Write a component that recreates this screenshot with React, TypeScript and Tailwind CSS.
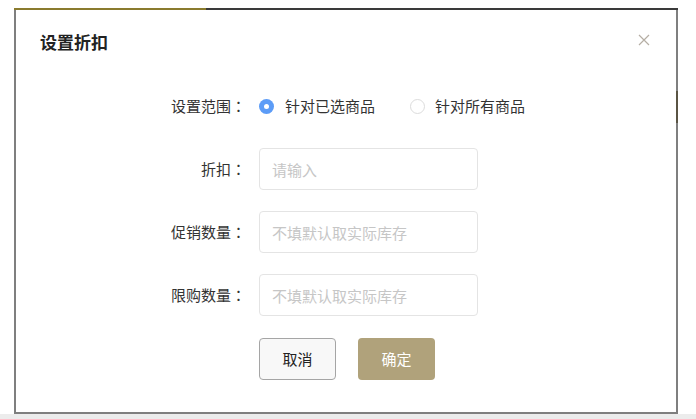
import React from "react";

const font = { fontFamily: '"Noto Sans CJK SC", "Noto Sans", sans-serif' };
const colonFont = { fontFamily: '"Noto Sans CJK JP", "Noto Sans CJK SC", sans-serif' };

function Label({ text }: { text: string }) {
  return (
    <div className="w-[230px] shrink-0 text-right text-[15px] leading-[20px] text-[#333333]">
      {text}
      <span style={colonFont}>：</span>
    </div>
  );
}

function Field({ label, placeholder }: { label: string; placeholder: string }) {
  return (
    <div className="flex h-[42px] items-center">
      <Label text={label} />
      <input
        className="ml-[13px] h-[42px] w-[219px] rounded-[4px] border border-[#e4e4e4] bg-white px-[12px] text-[15px] text-[#333] outline-none placeholder:text-[#c6c6c6]"
        placeholder={placeholder}
        style={font}
      />
    </div>
  );
}

export default function App() {
  return (
    <div className="flex h-[419px] w-[696px] flex-col overflow-hidden bg-white" style={font}>
      <div className="flex flex-1 pl-[14px] pt-[8px]">
        <div className="relative flex h-[406px] w-[664px] flex-col">
          <div className="flex h-[2px] shrink-0">
            <div className="w-[192px] bg-[#8a7b2e]" />
            <div className="flex-1 bg-[#3a3a3a]" />
          </div>
          <div className="flex flex-1 flex-col border-x-2 border-b-2 border-[#7f7f7f] bg-white">
            <div className="flex items-center justify-between pl-[24px] pr-[26px] pt-[20px]">
              <div className="text-[17px] font-bold leading-[24px] text-[#222222]">设置折扣</div>
              <svg width="12" height="12" viewBox="0 0 12 12" className="mt-[-4px]">
                <path d="M1 1L11 11M11 1L1 11" stroke="#b5aea4" strokeWidth="1.2" fill="none" />
              </svg>
            </div>
            <div className="mt-[31px] flex flex-col gap-[21px]">
              <div className="flex h-[42px] items-center">
                <Label text="设置范围" />
                <div className="ml-[13px] flex items-center">
                  <span className="flex h-[15px] w-[15px] items-center justify-center rounded-full bg-[#5c9cf7]">
                    <span className="h-[5px] w-[5px] rounded-full bg-white" />
                  </span>
                  <span className="ml-[11px] text-[15px] leading-[20px] text-[#333]">针对已选商品</span>
                  <span className="ml-[35px] h-[15px] w-[15px] rounded-full border border-[#dcdcdc] bg-white" />
                  <span className="ml-[10px] text-[15px] leading-[20px] text-[#333]">针对所有商品</span>
                </div>
              </div>
              <Field label="折扣" placeholder="请输入" />
              <Field label="促销数量" placeholder="不填默认取实际库存" />
              <Field label="限购数量" placeholder="不填默认取实际库存" />
              <div className="mt-[1px] flex h-[42px] items-center pl-[243px]">
                <button
                  className="h-[42px] w-[77px] rounded-[4px] border border-[#a5a5a5] bg-[#f8f8f8] text-[15px] text-[#222]"
                  style={font}
                >
                  取消
                </button>
                <button
                  className="ml-[22px] h-[42px] w-[77px] rounded-[4px] bg-[#b0a27b] text-[15px] text-white"
                  style={font}
                >
                  确定
                </button>
              </div>
            </div>
          </div>
          <div className="absolute right-0 top-[83px] h-[32px] w-[2px] bg-[#5a5444]" />
        </div>
      </div>
      <div className="h-[5px] shrink-0 bg-[#ececec]" />
    </div>
  );
}
